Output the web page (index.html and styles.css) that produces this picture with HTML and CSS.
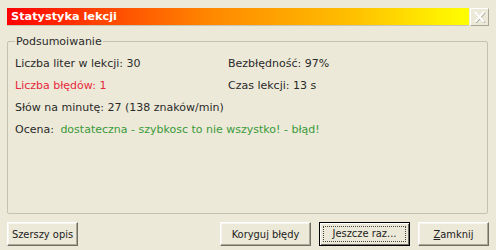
FILE: index.html
```html
<!DOCTYPE html>
<html lang="pl">

<head>
    <meta charset="UTF-8" />
    <title>Statystyka lekcji</title>
    <link rel="stylesheet" href="styles.css">
</head>

<body>
    <div class="window">
        <div class="titlebar">
            <div class="title">Statystyka lekcji</div>
            <div class="close">
                <svg width="13" height="12" viewBox="0 0 13 12">
                    <path d="M2 1 L11 11 M11 1 L2 11" stroke="#a8a698" stroke-width="2" transform="translate(0.7,0.7)" />
                    <path d="M2 1 L11 11 M11 1 L2 11" stroke="#ffffff" stroke-width="2" />
                </svg>
            </div>
        </div>

        <fieldset class="group">
            <legend>Podsumoiwanie</legend>
            <div class="stats">
                <div class="row">Liczba liter w lekcji: 30</div>
                <div class="row">Bezbłędność: 97%</div>
                <div class="row error">Liczba błędów: 1</div>
                <div class="row">Czas lekcji: 13 s</div>
                <div class="row wide">Słów na minutę: 27 (138 znaków/min)</div>
                <div class="row wide">Ocena: <span class="grade">dostateczna - szybkosc to nie wszystko! - błąd!</span></div>
            </div>
        </fieldset>

        <div class="buttons">
            <button class="btn">Szerszy opis</button>
            <div class="spacer"></div>
            <button class="btn wide-btn">Koryguj błędy</button>
            <button class="btn wide-btn default"><span class="focus">Jeszcze raz...</span></button>
            <button class="btn"><u>Z</u>amknij</button>
        </div>
    </div>
</body>

</html>
```

FILE: styles.css
```css
* {
    box-sizing: border-box;
}

body {
    margin: 0;
    background: #ece9d8;
    font-family: 'DejaVu Sans', Verdana, sans-serif;
    font-size: 11px;
    color: #2a2a2a;
}

.window {
    display: flex;
    flex-direction: column;
    height: 250px;
    padding: 8px 7px 0 7px;
}

.titlebar {
    display: flex;
    gap: 1px;
    height: 18px;
}

.title {
    flex: 1;
    padding: 1px 0 0 4px;
    font-weight: bold;
    font-size: 11.3px;
    line-height: 16px;
    color: #fff;
    background: linear-gradient(90deg, #ff0000 0%, #ff3d00 18%, #ff8a00 45%, #ffc000 75%, #ffff00 100%);
    border-bottom: 1px solid #c9c6b4;
}

.close {
    width: 19px;
    display: flex;
    justify-content: center;
    align-items: center;
    border: 1px solid;
    border-color: #fff #a8a698 #a8a698 #fff;
    background: #ece9d8;
}

.group {
    margin: 9px 0 0 0;
    padding: 2px 7px 0 7px;
    height: 179px;
    width: 481px;
    border: 1px solid #c5c2b2;
    border-radius: 2px;
}

.group legend {
    padding: 0 1px;
    margin-left: 0;
    font-size: 11px;
    color: #2a2a2a;
}

.stats {
    display: grid;
    grid-template-columns: 213px auto;
    grid-auto-rows: 22px;
    margin-top: 3px;
}

.row {
    line-height: 22px;
}

.row.wide {
    grid-column: 1 / 3;
}

.error {
    color: #e8283c;
}

.grade {
    margin-left: 3px;
    color: #3a9a3a;
}

.buttons {
    display: flex;
    gap: 8px;
    margin-top: 8px;
    height: 24px;
}

.spacer {
    flex: 1;
}

.btn {
    width: 71px;
    height: 24px;
    padding: 0;
    font-family: 'DejaVu Sans Condensed', 'Liberation Sans', sans-serif;
    font-size: 11px;
    color: #222;
    background: #ece9d8;
    border: 1px solid;
    border-color: #fff #716f64 #716f64 #fff;
    box-shadow: inset -1px -1px 0 #aca899, inset 1px 1px 0 #f6f5ee;
}

.wide-btn {
    width: 91px;
}

.default {
    border: 1px solid #000;
    box-shadow: inset 1px 1px 0 #fff, inset -1px -1px 0 #716f64;
    display: flex;
    justify-content: center;
    align-items: center;
}

.focus {
    display: block;
    width: 83px;
    height: 16px;
    line-height: 14px;
    border: 1px dotted #444;
}
```
